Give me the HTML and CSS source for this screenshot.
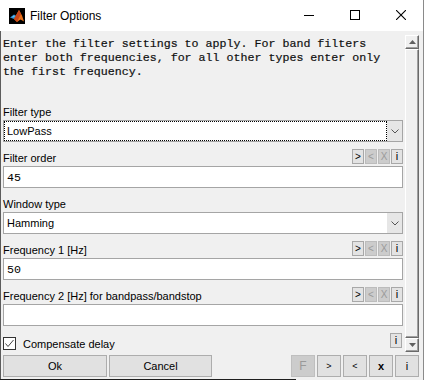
FILE: index.html
```html
<!DOCTYPE html>
<html>
<head>
    <meta charset="UTF-8">
    <title>Filter Options</title>
    <link rel="stylesheet" href="styles.css">
</head>
<body>

<div class="window">
    <div class="titlebar">
        <svg class="app-icon" width="16" height="16" viewBox="0 0 16 16">
            <rect width="16" height="16" fill="#000"/>
            <polygon points="1,9.5 5,6.5 7.5,8 5,11" fill="#2d8fd6"/>
            <polygon points="3,9 5,7.5 6,8.2 4,9.6" fill="#6cc3f0"/>
            <polygon points="5,11 10,2 13,7.5 15,13.5 11.5,11.5 8,14" fill="#e8701a"/>
            <polygon points="10,2 12,6 9.5,11 8,14 5,11" fill="#c6451a"/>
        </svg>
        <span class="title">Filter Options</span>
        <div class="win-btns">
            <div class="win-btn">
                <svg width="10" height="10" viewBox="0 0 10 10"><line x1="0" y1="5.5" x2="10" y2="5.5" stroke="#000"/></svg>
            </div>
            <div class="win-btn">
                <svg width="10" height="10" viewBox="0 0 10 10"><rect x="0.5" y="0.5" width="9" height="9" fill="none" stroke="#000"/></svg>
            </div>
            <div class="win-btn">
                <svg width="10" height="10" viewBox="0 0 10 10"><path d="M0 0 L10 10 M10 0 L0 10" stroke="#000" stroke-width="1.1"/></svg>
            </div>
        </div>
    </div>

    <div class="client">
        <div class="main">
            <div class="panel">
                <div class="intro">Enter the filter settings to apply. For band filters<br>enter both frequencies, for all other types enter only<br>the first frequency.</div>

                <div class="field first">
                    <div class="field-head"><span class="label">Filter type</span></div>
                    <div class="select">
                        <span class="select-text focused">LowPass</span>
                        <span class="select-arrow"><svg width="8" height="5" viewBox="0 0 8 5"><polyline points="0.5,0.5 4,4 7.5,0.5" fill="none" stroke="#555"/></svg></span>
                    </div>
                </div>

                <div class="field">
                    <div class="field-head">
                        <span class="label">Filter order</span>
                        <div class="mini-btns">
                            <span class="mini-btn">&gt;</span>
                            <span class="mini-btn off">&lt;</span>
                            <span class="mini-btn off">X</span>
                            <span class="mini-btn info">i</span>
                        </div>
                    </div>
                    <div class="edit">45</div>
                </div>

                <div class="field">
                    <div class="field-head"><span class="label">Window type</span></div>
                    <div class="select">
                        <span class="select-text">Hamming</span>
                        <span class="select-arrow"><svg width="8" height="5" viewBox="0 0 8 5"><polyline points="0.5,0.5 4,4 7.5,0.5" fill="none" stroke="#555"/></svg></span>
                    </div>
                </div>

                <div class="field">
                    <div class="field-head">
                        <span class="label">Frequency 1 [Hz]</span>
                        <div class="mini-btns">
                            <span class="mini-btn">&gt;</span>
                            <span class="mini-btn off">&lt;</span>
                            <span class="mini-btn off">X</span>
                            <span class="mini-btn info">i</span>
                        </div>
                    </div>
                    <div class="edit">50</div>
                </div>

                <div class="field">
                    <div class="field-head">
                        <span class="label">Frequency 2 [Hz] for bandpass/bandstop</span>
                        <div class="mini-btns">
                            <span class="mini-btn">&gt;</span>
                            <span class="mini-btn off">&lt;</span>
                            <span class="mini-btn off">X</span>
                            <span class="mini-btn info">i</span>
                        </div>
                    </div>
                    <div class="edit"></div>
                </div>

                <div class="check-row">
                    <label class="check">
                        <span class="check-box">
                            <svg width="11" height="11" viewBox="0 0 11 11"><polyline points="1.5,5.5 4,8.5 9.5,2" fill="none" stroke="#444"/></svg>
                        </span>
                        Compensate delay
                    </label>
                    <span class="mini-btn info">i</span>
                </div>
            </div>

            <div class="scrollbar">
                <div class="sb-btn">
                    <svg width="7" height="4" viewBox="0 0 7 4"><polygon points="0,4 3.5,0 7,4" fill="#606060"/></svg>
                </div>
                <div class="sb-thumb"></div>
                <div class="sb-btn">
                    <svg width="7" height="4" viewBox="0 0 7 4"><polygon points="0,0 3.5,4 7,0" fill="#606060"/></svg>
                </div>
            </div>
        </div>

        <div class="actions">
            <button class="btn ok">Ok</button>
            <button class="btn cancel">Cancel</button>
            <div class="spacer"></div>
            <button class="btn sq" disabled>F</button>
            <button class="btn sq small">&gt;</button>
            <button class="btn sq small">&lt;</button>
            <button class="btn sq bold">x</button>
            <button class="btn sq">i</button>
        </div>
    </div>
</div>

</body>
</html>
```

FILE: styles.css
```css
html, body {
    margin: 0;
    padding: 0;
    width: 424px;
    height: 380px;
    overflow: hidden;
    background: #f0f0f0;
    font-family: "Liberation Sans", Arial, sans-serif;
    font-size: 11px;
    color: #000;
}

.window {
    position: relative;
    display: flex;
    flex-direction: column;
    width: 424px;
    height: 380px;
    box-sizing: border-box;
    border-right: 1px solid #8a8a8a;
}

/* stray dark edge along the bottom */
.window::after {
    content: "";
    position: absolute;
    left: 0;
    bottom: 0;
    width: 296px;
    height: 1px;
    background: #1e1e1e;
}

/* title bar */
.titlebar {
    display: flex;
    align-items: center;
    height: 31px;
    flex-shrink: 0;
    background: #ffffff;
}

.app-icon {
    margin-left: 9px;
    margin-top: 1px;
}

.title {
    margin-left: 5px;
    font-size: 12px;
    margin-top: 1px;
}

.win-btns {
    display: flex;
    margin-left: auto;
    height: 100%;
}

.win-btn {
    display: flex;
    align-items: center;
    justify-content: center;
    width: 46px;
    height: 100%;
    padding-bottom: 1px;
    box-sizing: border-box;
}

.win-btn:last-child {
    width: 45px;
}

/* client area */
.client {
    flex: 1;
    display: flex;
    flex-direction: column;
    border-left: 1px solid #5c5c5c;
}

.main {
    flex: 1;
    display: flex;
    gap: 2px;
    padding: 4px 4px 0 2px;
}

.panel {
    width: 400px;
}

.intro {
    margin-top: 2px;
    font-family: "Liberation Mono", "Courier New", monospace;
    font-size: 11.65px;
    line-height: 14px;
    white-space: nowrap;
    color: #111;
    -webkit-text-stroke: 0.2px #111;
}

.field {
    margin-top: 7px;
}

.field.first {
    margin-top: 24px;
}

.field-head {
    display: flex;
    align-items: flex-end;
    justify-content: space-between;
    height: 15px;
    margin-bottom: 2px;
}

.label {
    line-height: 11px;
    white-space: nowrap;
}

.mini-btns {
    display: flex;
    gap: 1px;
}

.mini-btn {
    display: flex;
    align-items: center;
    justify-content: center;
    width: 12px;
    height: 15px;
    box-sizing: border-box;
    border: 1px solid #a8a8a8;
    background: #e3e3e3;
    font-size: 10px;
    line-height: 1;
}

.mini-btn.off {
    background: #cccccc;
    border-color: #bcbcbc;
    color: #9a9a9a;
}

.mini-btn.info {
    color: #000;
    font-size: 11px;
}

.select {
    display: flex;
    height: 22px;
    box-sizing: border-box;
    border: 1px solid #a5a5a5;
    background: #fff;
}

.select-text {
    flex: 1;
    display: flex;
    align-items: center;
    padding-left: 2px;
    border: 1px solid transparent;
}

.select-text.focused {
    border: 1px dotted #000;
}

.select-arrow {
    display: flex;
    align-items: center;
    justify-content: center;
    width: 15px;
    background: #e6e6e6;
}

.edit {
    display: flex;
    align-items: center;
    height: 22px;
    box-sizing: border-box;
    padding-left: 3px;
    border: 1px solid #a5a5a5;
    background: #fff;
    font-family: "Liberation Mono", "Courier New", monospace;
    font-size: 11.65px;
}

.check-row {
    display: flex;
    justify-content: space-between;
    height: 17px;
    margin-top: 7px;
}

.check-row .mini-btn {
    align-self: flex-start;
    margin-right: 1px;
}

.check {
    display: flex;
    align-items: center;
    align-self: flex-end;
    gap: 7px;
    height: 13px;
}

.check-box {
    display: flex;
    align-items: center;
    justify-content: center;
    width: 13px;
    height: 13px;
    box-sizing: border-box;
    border: 1px solid #333;
    background: #fff;
}

/* classic scrollbar */
.scrollbar {
    display: flex;
    flex-direction: column;
    width: 14px;
    height: 317px;
}

.sb-btn, .sb-thumb {
    box-sizing: border-box;
    border: 1px solid;
    border-color: #ffffff #6a6a6a #6a6a6a #ffffff;
    background: #f0f0f0;
    box-shadow: inset -1px -1px 0 #a0a0a0;
}

.sb-btn {
    display: flex;
    align-items: center;
    justify-content: center;
    height: 14px;
}

.sb-thumb {
    flex: 1;
}

/* bottom buttons */
.actions {
    display: flex;
    gap: 2px;
    height: 22px;
    padding: 3px 4px 3px 2px;
}

.btn {
    margin: 0;
    padding: 0;
    height: 22px;
    box-sizing: border-box;
    border: 1px solid #adadad;
    background: #e1e1e1;
    font-family: "Liberation Sans", Arial, sans-serif;
    font-size: 11px;
    color: #000;
}

.btn.ok {
    width: 104px;
}

.btn.cancel {
    width: 103px;
}

.btn.sq {
    width: 24px;
}

.btn.small {
    font-size: 9px;
}

.btn.sq:disabled {
    background: #cccccc;
    border-color: #bfbfbf;
    color: #999999;
    font-size: 12px;
}

.btn.bold {
    font-weight: bold;
}

.spacer {
    flex: 1;
}
```
